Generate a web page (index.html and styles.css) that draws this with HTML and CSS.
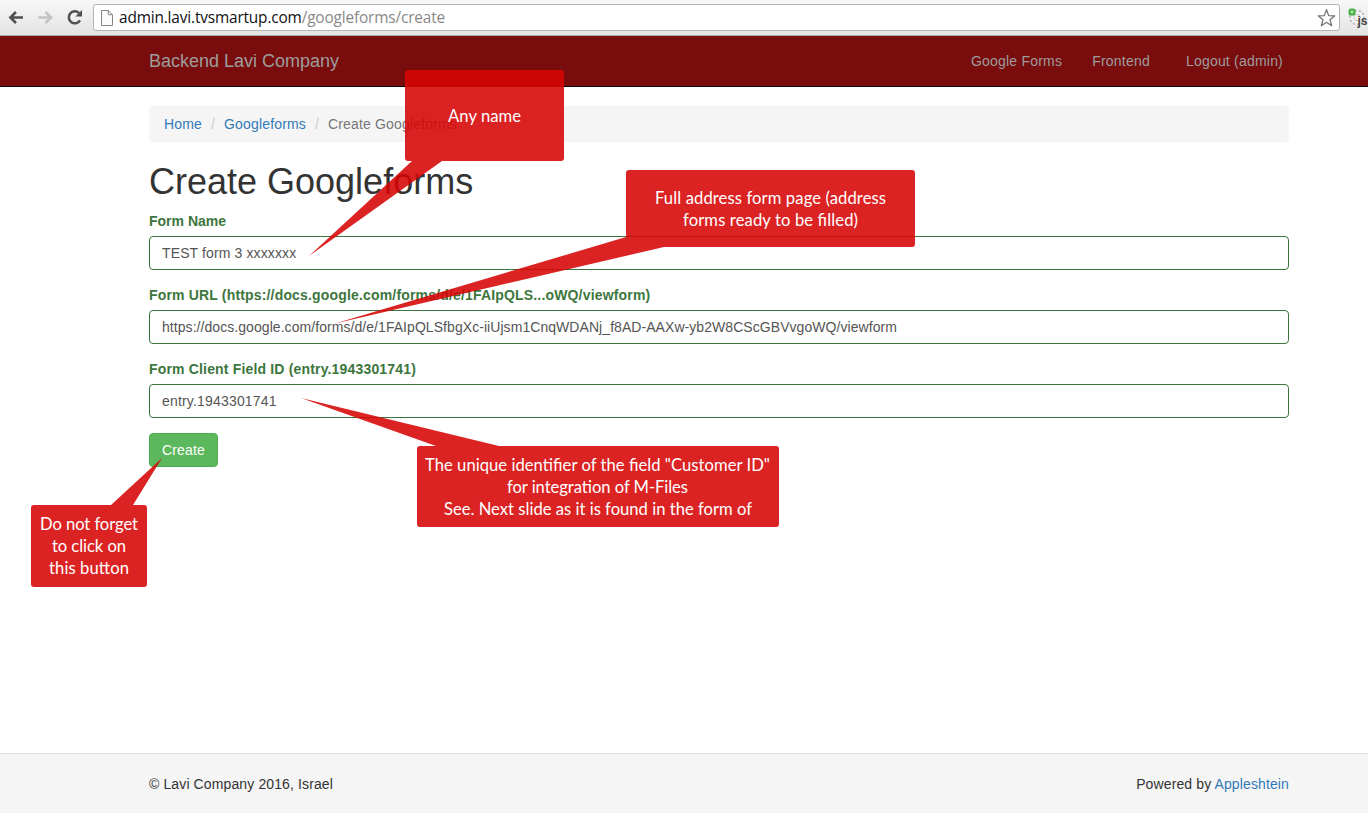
FILE: index.html
```html
<!DOCTYPE html>
<html lang="en">
<head>
<meta charset="utf-8">
<title>Create Googleforms</title>
<link rel="stylesheet" href="styles.css">
</head>
<body>
<div class="browser">
  <svg class="nav-icon" width="18" height="18" viewBox="0 0 18 18"><path d="M16 9.500H4M9 4 3.400 9.500 9 15" fill="none" stroke="#505050" stroke-width="2.600"/></svg>
  <svg class="nav-icon" width="18" height="18" viewBox="0 0 18 18"><path d="M2.500 9.500h12M9.500 4 15.100 9.500 9.500 15" fill="none" stroke="#c3c3c3" stroke-width="2.600"/></svg>
  <svg class="nav-icon" width="18" height="18" viewBox="0 0 18 18"><path d="M15 12.300A6 6 0 1 1 14 5" fill="none" stroke="#505050" stroke-width="2.600"/><path d="M17 2v6.600h-6.600z" fill="#505050"/></svg>
  <div class="omnibox">
    <svg class="page-icon" width="12" height="16" viewBox="0 0 12 16"><path d="M.5.5h6.800l4.200 4.200v10.800H.5zM7.300.5v4.200h4.200" fill="#fafafa" stroke="#858585"/></svg>
    <span class="url">admin.lavi.tvsmartup.com<span class="path">/googleforms/create</span></span>
    <svg class="star" width="20" height="20" viewBox="0 0 20 20"><path d="m10.500 1.600 2.200 6 6.100.2-4.800 3.900 1.700 6-5.200-3.400-5.200 3.400 1.700-6-4.800-3.900 6.100-.2z" fill="#fff" stroke="#747474" stroke-width="1.300" stroke-linejoin="round"/></svg>
  </div>
  <svg class="extension" width="20" height="22" viewBox="0 0 20 22"><circle cx="9" cy="9.500" r="7" fill="#f3f3f3" stroke="#bdbdbd" stroke-width="1.800" stroke-dasharray="2.500 1.800"/><circle cx="9" cy="9.500" r="3.200" fill="none" stroke="#c9c9c9"/><rect x=".5" y=".5" width="7" height="7" rx="2.500" fill="#43af43"/><rect x="2.600" y="2.600" width="2.800" height="2.800" fill="#a8dfa8"/><text x="9.500" y="16.500" class="ext-label">js</text></svg>
</div>
<nav class="navbar">
  <div class="container">
    <a class="brand">Backend Lavi Company</a>
    <div class="links"><a>Google Forms</a><a>Frontend</a><a class="logout">Logout (admin)</a></div>
  </div>
</nav>
<main class="container content">
  <ol class="breadcrumb"><li><a>Home</a></li><li><a>Googleforms</a></li><li class="current">Create Googleforms</li></ol>
  <h1>Create Googleforms</h1>
  <div class="group"><label class="name-label">Form Name</label><div class="control name">TEST form 3 xxxxxxx</div></div>
  <div class="group"><label>Form URL (https://docs.google.com/forms/d/e/1FAIpQLS...oWQ/viewform)</label><div class="control form-url">https://docs.google.com/forms/d/e/1FAIpQLSfbgXc-iiUjsm1CnqWDANj_f8AD-AAXw-yb2W8CScGBVvgoWQ/viewform</div></div>
  <div class="group"><label>Form Client Field ID (entry.1943301741)</label><div class="control entry">entry.1943301741</div></div>
  <button class="create">Create</button>
</main>
<footer class="footer"><div class="container"><span>© Lavi Company 2016, Israel</span><span>Powered by <a>Appleshtein</a></span></div></footer>
<svg class="callouts" width="1368" height="813" viewBox="0 0 1368 813">
  <g class="shapes">
    <path d="M408 70H561a3 3 0 0 1 3 3V158a3 3 0 0 1-3 3H442L309 256 412 161H408a3 3 0 0 1-3-3V73a3 3 0 0 1 3-3z"/>
    <path d="M629 170H912a3 3 0 0 1 3 3V244a3 3 0 0 1-3 3H664L335 323.500 626 237V173a3 3 0 0 1 3-3z"/>
    <path d="M420 446H436L301 398 499 446H776a3 3 0 0 1 3 3V524a3 3 0 0 1-3 3H420a3 3 0 0 1-3-3V449a3 3 0 0 1 3-3z"/>
    <path d="M34 505H111L162 458 133 505H144a3 3 0 0 1 3 3V584a3 3 0 0 1-3 3H34a3 3 0 0 1-3-3V508a3 3 0 0 1 3-3z"/>
  </g>
  <g class="notes">
    <text x="448" y="122" textLength="73">Any name</text>
    <text x="655" y="204" textLength="231">Full address form page (address</text>
    <text x="683" y="226" textLength="175">forms ready to be filled)</text>
    <text x="425" y="471" textLength="345">The unique identifier of the field "Customer ID"</text>
    <text x="507" y="493" textLength="181">for integration of M-Files</text>
    <text x="444" y="515" textLength="308">See. Next slide as it is found in the form of</text>
    <text x="40" y="530" textLength="98">Do not forget</text>
    <text x="52" y="552" textLength="74">to click on</text>
    <text x="49" y="574" textLength="80">this button</text>
  </g>
</svg>
</body>
</html>
```
FILE: styles.css
```css
* { box-sizing: border-box; }
body { margin: 0; height: 813px; display: flex; flex-direction: column; overflow: hidden; position: relative; background: #fff; color: #333; font: 14px/20px "Liberation Sans", Arial, sans-serif; }
a { color: #337ab7; }
.browser { height: 36px; flex: none; display: flex; align-items: flex-start; padding: 4px 0 0 7px; background: linear-gradient(#f8f8f8, #e3e3e3); border-bottom: 1px solid #aaa; overflow: hidden; }
.nav-icon { margin: 4px 11px 0 0; flex: none; }
.omnibox { width: 1247px; height: 27px; flex: none; margin-left: -1px; padding: 0 3px 0 7px; display: flex; align-items: center; background: #fff; border: 1px solid #b4b4b4; border-radius: 3px; }
.page-icon { margin-right: 6px; }
.url { flex: 1; color: #111; font: 15.4px/24px "Open Sans", sans-serif; letter-spacing: -.16px; white-space: nowrap; }
.path { color: #888; }
.extension { flex: none; margin: 4px 0 0 8px; }
.ext-label { font: bold 12px "Liberation Sans", sans-serif; fill: #444; }
.navbar { height: 51px; flex: none; background: #790c0c; border-bottom: 1px solid #080808; }
.container { width: 1140px; margin: 0 auto 0 149px; }
.navbar .container { height: 50px; display: flex; justify-content: space-between; align-items: center; }
.navbar a { color: #9d9d9d; }
.brand { font-size: 18px; }
.links { display: flex; gap: 30px; padding-right: 6px; letter-spacing: .21px; }
.links .logout { margin-left: 6px; }
.content { flex: 1; padding-top: 19px; }
.breadcrumb { height: 36px; margin: 0 0 20px; padding: 8px 15px; display: flex; list-style: none; background: #f5f5f5; border-radius: 4px; letter-spacing: .16px; }
.breadcrumb li + li::before { content: "/"; padding: 0 9px; color: #ccc; }
.breadcrumb .current { color: #777; }
h1 { margin: 0 0 9px; font-size: 36px; font-weight: normal; line-height: 40px; }
.group { margin-bottom: 15px; }
label { display: block; margin-bottom: 5px; font-weight: bold; color: #3c763d; letter-spacing: .17px; }
.name-label { letter-spacing: 0; }
.control { height: 34px; padding: 6px 12px; color: #555; border: 1px solid #3c763d; border-radius: 4px; }
.name { letter-spacing: .12px; }
.form-url { letter-spacing: .06px; }
.entry { letter-spacing: .18px; }
.create { display: block; height: 34px; width: 69px; padding: 0; color: #fff; background: #5cb85c; border: 1px solid #4cae4c; border-radius: 4px; font: inherit; letter-spacing: .2px; }
.footer { height: 60px; flex: none; padding-top: 20px; background: #f5f5f5; border-top: 1px solid #ddd; letter-spacing: .12px; }
.footer .container { display: flex; justify-content: space-between; }
.callouts { position: absolute; left: 0; top: 0; }
.shapes { fill: rgba(215, 4, 4, .88); }
.notes { fill: #fff; font: 16.6px Lato, sans-serif; }
```
